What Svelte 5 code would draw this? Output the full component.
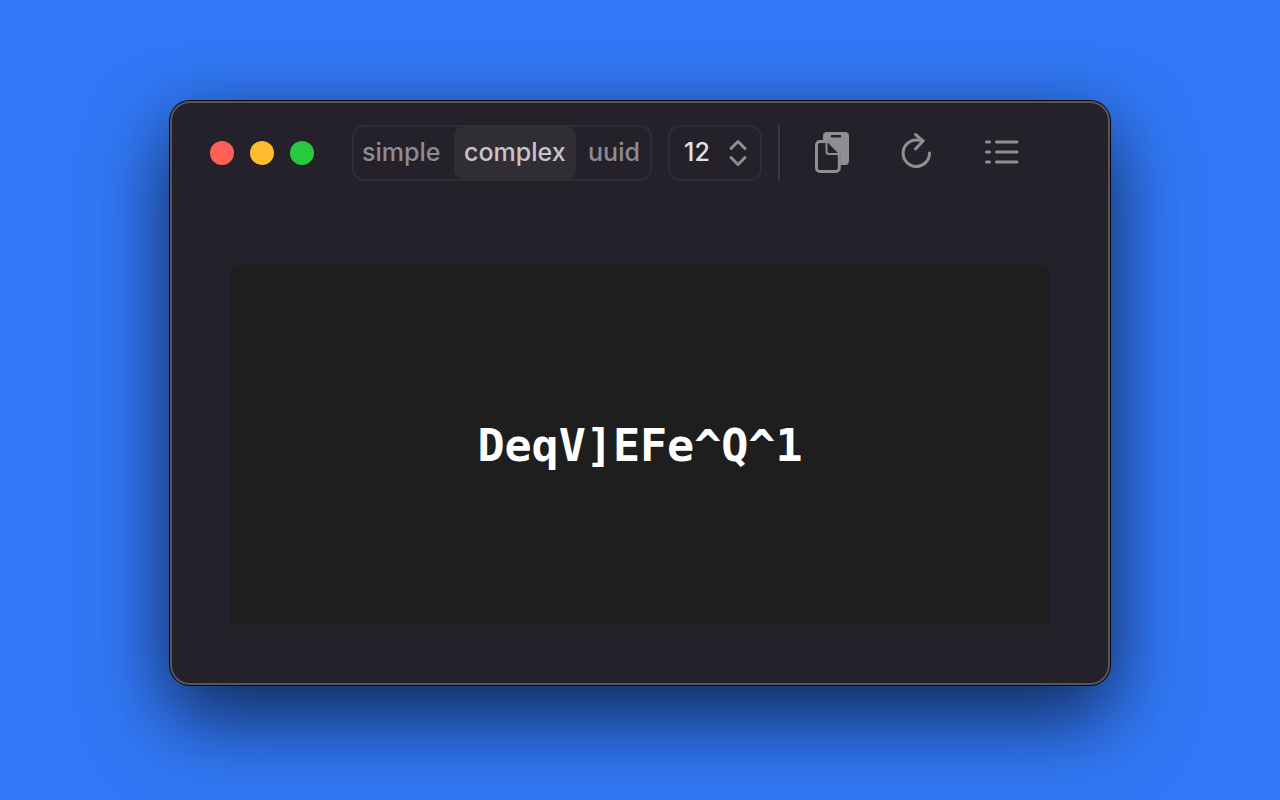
<script lang="ts">
  type Mode = "simple" | "complex" | "uuid";

  const modes: Mode[] = ["simple", "complex", "uuid"];
  const lengths = [8, 10, 12, 16, 20, 24, 32];
  const chars = "ABCDEFGHIJKLMNOPQRSTUVWXYZabcdefghijklmnopqrstuvwxyz0123456789";
  const symbols = "!@#$%^&*()[]{}";

  let mode = $state<Mode>("complex");
  let length = $state(12);
  let password = $state("DeqV]EFe^Q^1");

  function generate() {
    if (mode === "uuid") {
      password = crypto.randomUUID();
      return;
    }
    const pool = mode === "complex" ? chars + symbols : chars;
    const values = crypto.getRandomValues(new Uint32Array(length));
    password = Array.from(values, (v) => pool[v % pool.length]).join("");
  }

  function selectMode(next: Mode) {
    mode = next;
    generate();
  }

  function copy() {
    navigator.clipboard?.writeText(password);
  }
</script>

<main class="desktop">
  <section class="window">
    <header class="toolbar">
      <div class="lights">
        <button class="light close" aria-label="Close"></button>
        <button class="light minimize" aria-label="Minimize"></button>
        <button class="light zoom" aria-label="Zoom"></button>
      </div>

      <div class="modes" role="group" aria-label="Password type">
        {#each modes as item}
          <button
            class="mode"
            class:selected={mode === item}
            aria-pressed={mode === item}
            onclick={() => selectMode(item)}
          >
            {item}
          </button>
        {/each}
      </div>

      <div class="length">
        <select aria-label="Password length" bind:value={length} onchange={generate}>
          {#each lengths as n}
            <option value={n}>{n}</option>
          {/each}
        </select>
        <svg class="chevrons" viewBox="0 0 18 26" aria-hidden="true">
          <path d="M2 8.500 9 1.500l7 7M2 17.500l7 7 7-7" />
        </svg>
      </div>

      <div class="divider"></div>

      <div class="actions">
        <button class="action" aria-label="Copy" onclick={copy}>
          <svg width="36" height="42" viewBox="0 0 36 42">
            <path
              class="solid"
              fill-rule="evenodd"
              d="M13 0h18a4 4 0 0 1 4 4v25a4 4 0 0 1-4 4h-4.500V20L15 8H9V4a4 4 0 0 1 4-4Zm5 3a1 1 0 0 0 0 2.500h8a1 1 0 0 0 0-2.500Z"
            />
            <path
              class="sheet"
              d="M6 9.500H13a3 3 0 0 1 2.200.5L24.500 19.500a3 3 0 0 1 .8 2.200V36a3.500 3.500 0 0 1-3.500 3.500H6A3.500 3.500 0 0 1 2.500 36V13a3.500 3.500 0 0 1 3.500-3.500Z"
            />
            <path class="fold" d="M12.500 10v9.500a2.500 2.500 0 0 0 2.500 2.500h9.500" />
            <path class="corner" d="M14 11.500v7.500a1.500 1.500 0 0 0 1.500 1.500h7.500Z" />
          </svg>
        </button>
        <button class="action" aria-label="Regenerate" onclick={generate}>
          <svg width="34" height="38" viewBox="0 0 34 38">
            <path d="M29.500 19A13.200 13.200 0 1 1 16.300 6Q20 6 23 7" />
            <path d="m15.500.500 7.500 6.500-7.500 8" />
          </svg>
        </button>
        <button class="action" aria-label="History">
          <svg width="34" height="26" viewBox="0 0 34 26">
            <path d="M1.500 2h3M1.500 12h3M1.500 22h3M11.500 2h20.500M11.500 12h20.500M11.500 22h20.500" />
          </svg>
        </button>
      </div>
    </header>

    <output class="password">{password}</output>
  </section>
</main>

<style>
  :global(body) {
    margin: 0;
    background: #3278f6;
  }

  .desktop {
    box-sizing: border-box;
    min-height: 100vh;
    padding: 101px 170px;
    overflow: hidden;
    font-family: Inter, "Liberation Sans", sans-serif;
  }

  .window {
    padding: 22px 58px 58px;
    background: #25212b;
    border: 2px solid #58545c;
    border-radius: 20px;
    box-shadow:
      0 0 0 1px #05070d,
      0 36px 80px rgba(0, 0, 0, 0.56),
      0 8px 70px rgba(0, 0, 0, 0.2);
  }

  .toolbar {
    display: flex;
    align-items: center;
    height: 56px;
    margin: 0 -20px;
  }

  button {
    padding: 0;
    border: none;
    background: none;
    font: inherit;
    color: inherit;
  }

  .lights {
    display: flex;
    gap: 16px;
    margin-right: 38px;
  }

  .light {
    width: 24px;
    height: 24px;
    border-radius: 50%;
  }

  .close {
    background: #ff5f57;
  }

  .minimize {
    background: #febc2e;
  }

  .zoom {
    background: #28c840;
  }

  .modes {
    display: grid;
    grid-template-columns: 102px 122px 76px;
    height: 56px;
    margin-right: 16px;
    border-radius: 12px;
    box-shadow: inset 0 0 0 2px #302c35;
  }

  .mode {
    padding: 0 10px 2px;
    border-radius: 12px;
    color: #8f8b93;
    font-size: 25px;
    font-weight: 500;
    line-height: 54px;
    text-align: left;
  }

  .mode.selected {
    background: #312d34;
    color: #c7c5c9;
  }

  .mode:last-child {
    text-align: center;
  }

  .length {
    position: relative;
    width: 94px;
    height: 56px;
    margin-right: 16px;
  }

  .length select {
    width: 100%;
    height: 100%;
    padding: 0 0 2px 14px;
    appearance: none;
    background: transparent;
    border: 2px solid #302c35;
    border-radius: 12px;
    color: #e3e1e4;
    font-family: inherit;
    font-size: 25px;
    font-weight: 500;
  }

  .chevrons {
    position: absolute;
    top: 15px;
    right: 15px;
    width: 18px;
    height: 26px;
    pointer-events: none;
  }

  .divider {
    width: 2px;
    height: 56px;
    background: #3b3740;
  }

  .actions {
    display: flex;
    margin-left: 9px;
  }

  .action {
    display: grid;
    place-items: center;
    width: 85px;
    height: 56px;
  }

  svg {
    overflow: visible;
    fill: none;
    stroke: #918d95;
    stroke-width: 3;
    stroke-linecap: round;
    stroke-linejoin: round;
  }

  .solid {
    fill: #918d95;
    stroke: none;
  }

  .sheet {
    fill: #25212b;
  }

  .fold {
    stroke-width: 2;
  }

  .corner {
    fill: #25212b;
    stroke: none;
  }

  .password {
    display: flex;
    align-items: center;
    justify-content: center;
    min-height: 360px;
    margin-top: 84px;
    background: #1e1e1e;
    border-radius: 8px;
    color: #fff;
    font-family: "DejaVu Sans Mono", monospace;
    font-size: 45px;
    font-weight: 700;
  }
</style>
